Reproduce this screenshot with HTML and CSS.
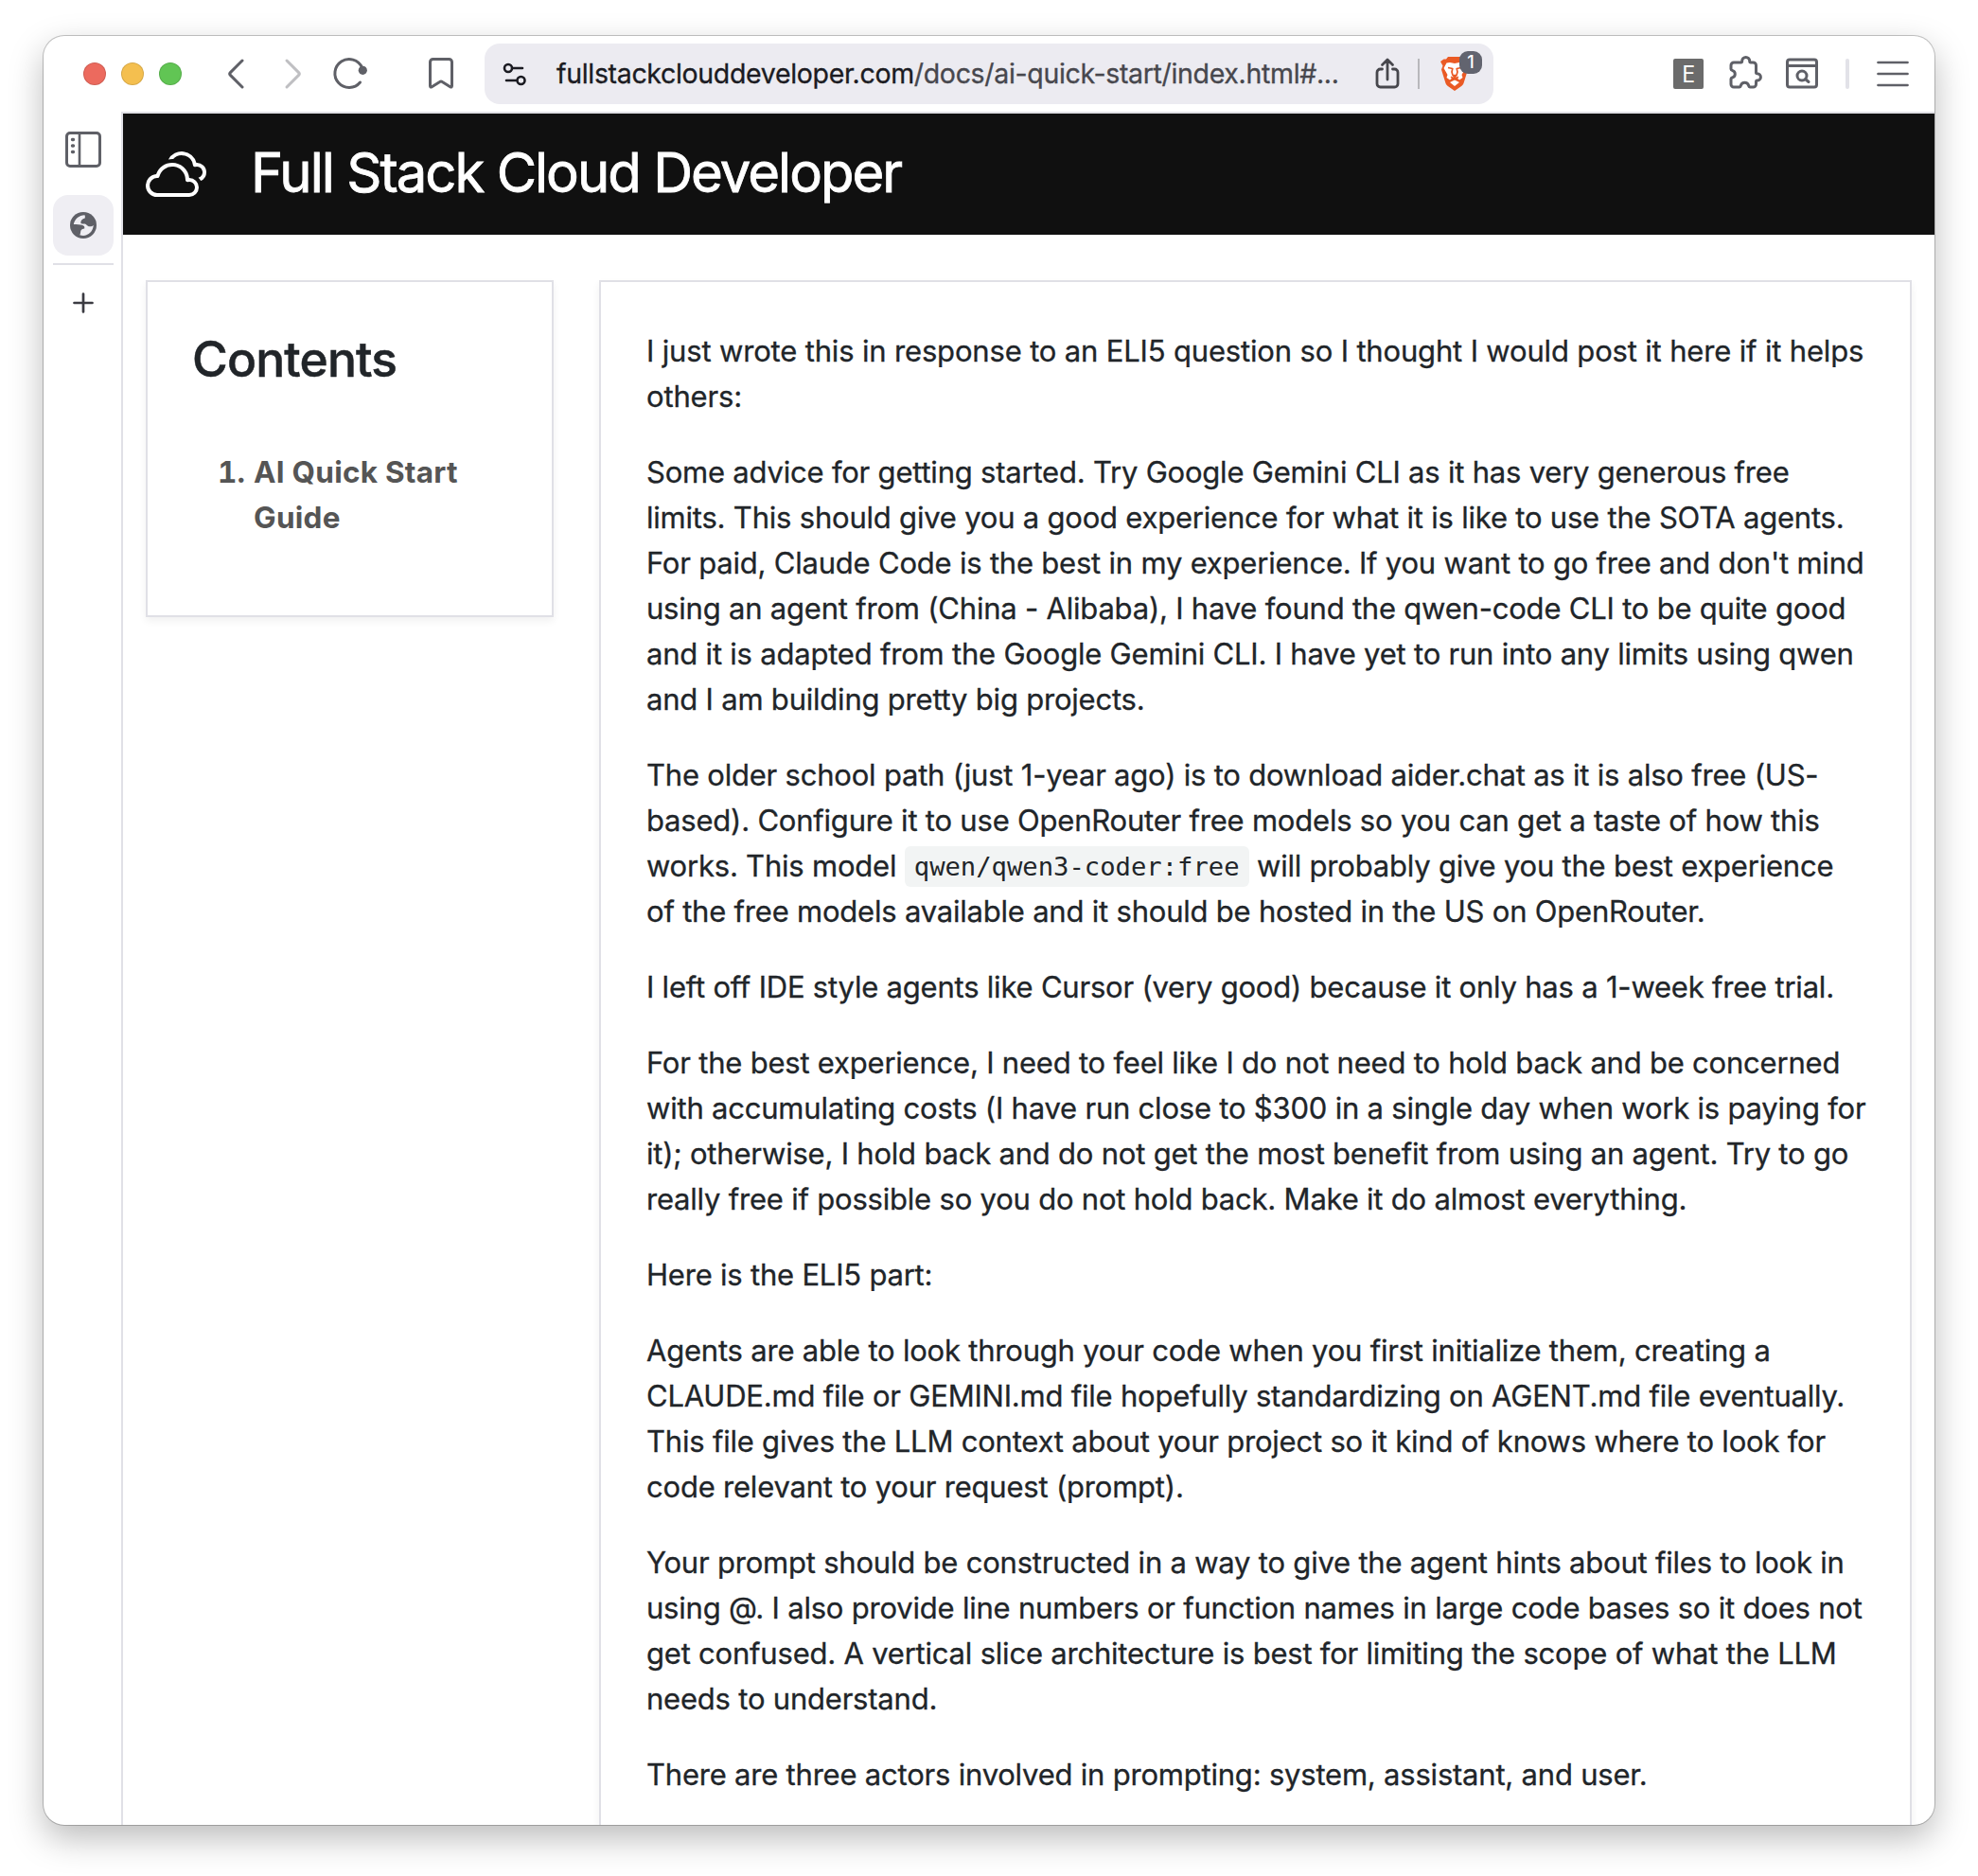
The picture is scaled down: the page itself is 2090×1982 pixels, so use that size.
FILE: index.html
```html
<!DOCTYPE html>
<html lang="en">
<head>
<meta charset="utf-8">
<title>Full Stack Cloud Developer</title>
<link rel="stylesheet" href="styles.css">
</head>
<body>
<div class="window">
  <div class="toolbar">
    <div class="lights"><i class="light red"></i><i class="light yellow"></i><i class="light green"></i></div>
    <svg class="ico back" width="36" height="40" viewBox="0 0 36 40"><path d="M25 6 12.400 18.600a2 2 0 0 0 0 2.800L25 34"/></svg>
    <svg class="ico forward" width="36" height="40" viewBox="0 0 36 40"><path d="M11 6 23.600 18.600a2 2 0 0 1 0 2.800L11 34"/></svg>
    <svg class="ico reload" width="40" height="40" viewBox="0 0 40 40"><path d="M31.500 13.200A15 15 0 1 0 29.500 29"/><circle class="solid" cx="32.300" cy="16.300" r="4.600"/></svg>
    <svg class="ico bookmark" width="40" height="40" viewBox="0 0 40 40"><path d="M11.500 4.500h17a3 3 0 0 1 3 3v25.200q0 2-1.800 1L21.300 28.500q-1.300-.9-2.600 0L10.300 33.700q-1.800 1-1.800-1V7.500a3 3 0 0 1 3-3Z"/></svg>
    <div class="address">
      <svg class="ico site" width="28" height="28" viewBox="0 0 28 28"><circle cx="7" cy="8" r="4"/><path d="M12 8h10M5 21h10"/><circle cx="20.500" cy="21" r="4"/></svg>
      <div class="url"><b>fullstackclouddeveloper.com</b>/docs/ai-quick-start/index.html#...</div>
      <svg class="ico share" width="28" height="36" viewBox="0 0 28 36"><path d="M8.500 13H6.500a3.500 3.500 0 0 0-3.500 3.500v12A3.500 3.500 0 0 0 6.500 32h15a3.500 3.500 0 0 0 3.500-3.500v-12a3.500 3.500 0 0 0-3.500-3.500H19.500M14 24V4M8.500 8.500l5.500-5.500 5.500 5.500"/></svg>
      <i class="addr-sep"></i>
      <div class="shield">
        <svg width="32" height="38" viewBox="0 0 32 38"><path fill="#ea5a25" d="M9 1h14l3.500 3.500 3.500 1-1.500 5 1.500 4-4.500 14.500a6 6 0 0 1-2 2.700L16 37l-7.500-5.300a6 6 0 0 1-2-2.700L2 14.500l1.500-4L1 6l3.500-2.500L7 3.500Z"/><path fill="#fff" d="M7.500 7.500 11 7l5 1 5-1 3.500.5 3 5.500-4 7 1 3-3.500 2.500-3-2.700-2-.8-2 .8-3 2.700L7.500 23l1-3-4-7Z"/><path fill="#fff" d="m16 25.500 5 2.500-5 4-5-4Z"/><path fill="none" stroke="#ea5a25" stroke-width="1.700" stroke-linejoin="round" d="m9 12.500 4.800 1-.8 3.500 1 3.500M23 12.500l-4.800 1 .8 3.500-1 3.500M12 22.300l4 2.200 4-2.200M14 20.500h4l-2 2Z"/></svg>
        <span class="badge">1</span>
      </div>
    </div>
    <div class="ext">E</div>
    <svg class="ico puzzle" width="40" height="40" viewBox="0 0 40 40"><path d="M8 8h7.500q1.200 0 1.200-1.500a4 4 0 0 1 8 0q0 1.500 1.200 1.500H28.500a3 3 0 0 1 3 3v7.500q0 1.200 1.200 1.200a3.600 3.600 0 0 1 0 7.400q-1.200 0-1.200 1.500V31a3 3 0 0 1-3 3h-3.200q-1.300 0-1.700-1.800a4.300 4.300 0 0 0-8.200 0Q15 34 13.700 34H8a3 3 0 0 1-3-3v-5.700q0-1 1.700-1.500a3.800 3.800 0 0 0 0-7.200Q5 16 5 15v-4a3 3 0 0 1 3-3Z"/></svg>
    <svg class="ico find" width="40" height="40" viewBox="0 0 40 40"><rect x="4.500" y="5" width="31" height="29" rx="2.500"/><path d="M5 11.500h30"/><circle cx="20" cy="22" r="5"/><path d="m23.500 25.500 3.500 3"/></svg>
    <i class="bar-sep"></i>
    <svg class="ico menu" width="40" height="40" viewBox="0 0 40 40"><path d="M4.500 8h31M4.500 20h31M4.500 32h31"/></svg>
  </div>
  <div class="body">
    <div class="rail">
      <svg class="ico panel" width="40" height="40" viewBox="0 0 40 40"><rect x="2.500" y="2.500" width="35" height="35" rx="3.500"/><path class="thin" d="M16 3v34"/><path class="dots" d="M8.500 9.500h1M8.500 16h1M8.500 22.500h1"/></svg>
      <div class="tab"><svg width="32" height="32" viewBox="0 0 32 32"><circle cx="16" cy="16" r="14" fill="#5f6067"/><path fill="#efeef3" d="M17.500 5.300c-6 .2-10.700 4.200-11.700 9.700 3.500.4 7 .2 9 .8 2.500.7 2.700 2.200 2.400 3.700-1.500.5-3.700.7-3.900 2.500-.2 1.500-.3 3-1 4.300 7 2.500 14-2.500 14.500-10.500-1 1.500-3.500 1.800-5 1.400-2-.5-2.500-2.200-4-2.600-1.500-.3-3.700.3-4.300-.8-.5-1.500 1-4.800 3.800-5 .9-.5.700-2.400.2-3.500Z"/></svg></div>
      <i class="rail-line"></i>
      <svg class="ico plus" width="32" height="32" viewBox="0 0 32 32"><path d="M16 6.500v19M6.500 16h19"/></svg>
    </div>
    <div class="page">
      <header class="site-header">
        <svg width="64" height="64" viewBox="0 0 16 16" fill="#fff"><path d="M16 7.500a2.500 2.500 0 0 1-1.456 2.272 3.500 3.500 0 0 0-.65-.824 1.500 1.500 0 0 0-.789-2.896.5.5 0 0 1-.627-.421 3 3 0 0 0-5.220-1.625 5.600 5.600 0 0 0-1.276.088 4.002 4.002 0 0 1 7.392.91A2.500 2.500 0 0 1 16 7.500"/><path d="M7 5a4.500 4.500 0 0 1 4.473 4h.027a2.500 2.500 0 0 1 0 5H3a3 3 0 0 1-.247-5.990A4.500 4.500 0 0 1 7 5m3.500 4.500a3.500 3.500 0 0 0-6.890-.873.5.5 0 0 1-.51.375A2 2 0 1 0 3 13h8.500a1.500 1.500 0 1 0-.376-2.953.5.5 0 0 1-.624-.492z"/></svg>
        <h1>Full Stack Cloud Developer</h1>
      </header>
      <div class="columns">
        <nav class="card contents">
          <h2>Contents</h2>
          <ol><li>AI Quick Start<br>Guide</li></ol>
        </nav>
        <article class="card article">
          <p class="intro">I just wrote this in response to an ELI5 question so I thought I would post it here if it helps<br>others:</p>
          <p>Some advice for getting started. Try Google Gemini CLI as it has very generous free<br>limits. This should give you a good experience for what it is like to use the SOTA agents.<br>For paid, Claude Code is the best in my experience. If you want to go free and don't mind<br>using an agent from (China - Alibaba), I have found the qwen-code CLI to be quite good<br>and it is adapted from the Google Gemini CLI. I have yet to run into any limits using qwen<br>and I am building pretty big projects.</p>
          <p>The older school path (just 1-year ago) is to download aider.chat as it is also free (US-<br>based). Configure it to use OpenRouter free models so you can get a taste of how this<br>works. This model <code>qwen/qwen3-coder:free</code> will probably give you the best experience<br>of the free models available and it should be hosted in the US on OpenRouter.</p>
          <p>I left off IDE style agents like Cursor (very good) because it only has a 1-week free trial.</p>
          <p>For the best experience, I need to feel like I do not need to hold back and be concerned<br>with accumulating costs (I have run close to $300 in a single day when work is paying for<br>it); otherwise, I hold back and do not get the most benefit from using an agent. Try to go<br>really free if possible so you do not hold back. Make it do almost everything.</p>
          <p>Here is the ELI5 part:</p>
          <p>Agents are able to look through your code when you first initialize them, creating a<br>CLAUDE.md file or GEMINI.md file hopefully standardizing on AGENT.md file eventually.<br>This file gives the LLM context about your project so it kind of knows where to look for<br>code relevant to your request (prompt).</p>
          <p>Your prompt should be constructed in a way to give the agent hints about files to look in<br>using @. I also provide line numbers or function names in large code bases so it does not<br>get confused. A vertical slice architecture is best for limiting the scope of what the LLM<br>needs to understand.</p>
          <p>There are three actors involved in prompting: system, assistant, and user.</p>
        </article>
      </div>
    </div>
  </div>
</div>
</body>
</html>
```
FILE: styles.css
```css
* { box-sizing: border-box; }
body {
  margin: 0;
  padding: 38px 46px 54px;
  height: 1982px;
  background: #fff;
  font-family: Inter, "Liberation Sans", sans-serif;
  color: #212529;
  overflow: hidden;
}
.window {
  height: 1890px;
  display: flex;
  flex-direction: column;
  background: #fff;
  border-radius: 22px;
  overflow: hidden;
  box-shadow: 0 0 0 1px rgba(0, 0, 0, .22), 0 14px 36px rgba(0, 0, 0, .27);
}
.ico { flex: none; fill: none; stroke: #5f6067; stroke-width: 3; stroke-linecap: round; stroke-linejoin: round; }
.ico .solid { fill: #5f6067; stroke: none; }

.toolbar { flex: none; height: 80px; display: flex; align-items: center; padding-left: 42px; }
.lights { display: flex; gap: 16px; }
.light { width: 24px; height: 24px; border-radius: 50%; border: 1px solid rgba(0, 0, 0, .12); }
.red { background: #ec6a5e; }
.yellow { background: #f4bf4f; }
.green { background: #61c554; }
.back { margin-left: 39px; }
.forward { margin-left: 25px; stroke: #bfbfc2; }
.reload { margin-left: 23px; }
.bookmark { margin-left: 55px; }
.address {
  flex: none; width: 1066px; height: 64px; margin-left: 26px; padding-left: 18px;
  display: flex; align-items: center; background: #ecebf1; border-radius: 16px;
}
.site { stroke: #1b1b22; stroke-width: 2.6; }
.url { width: 850px; margin-left: 30px; font-size: 28.500px; letter-spacing: -.33px; line-height: 40px; color: #47474d; white-space: nowrap; -webkit-text-stroke: .3px; }
.url b { font-weight: 400; color: #1b1b22; }
.share { margin-left: 14px; stroke: #47474d; stroke-width: 2.800; }
.addr-sep { width: 2px; height: 32px; margin-left: 18px; background: #b8b8bc; }
.shield { position: relative; width: 32px; height: 38px; margin-left: 21px; }
.shield svg { display: block; }
.badge {
  position: absolute; left: 21px; top: -5px; width: 24px; height: 24px; border-radius: 9px;
  background: #62646f; color: #fff; font-size: 18px; font-weight: 500; line-height: 24px; text-align: center;
}
.ext {
  flex: none; width: 32px; height: 32px; margin-left: 190px; border-radius: 2px;
  background: #6b6b6b; color: #fff; font: 26px/30px "Open Sans", sans-serif; text-align: center;
}
.puzzle { margin-left: 24px; }
.find { margin-left: 20px; }
.bar-sep { width: 4px; height: 32px; margin-left: 26px; border-radius: 2px; background: #e2e2e8; }
.menu { margin-left: 26px; stroke-width: 2.700; }

.body { flex: 1; min-height: 0; display: flex; }
.rail { flex: none; width: 82px; padding-top: 20px; display: flex; flex-direction: column; align-items: center; padding-left: 2px; }
.panel .thin { stroke-width: 2.600; }
.panel .dots { stroke-width: 3.400; }
.tab { width: 64px; height: 64px; margin-top: 28px; border-radius: 16px; background: #efeef3; display: flex; align-items: center; justify-content: center; }
.rail-line { width: 64px; height: 2px; margin-top: 8px; background: #e0e0e6; }
.plus { margin-top: 24px; stroke: #3b3b42; stroke-width: 2.700; }

.page { flex: 1; border-left: 2px solid #e0e0e6; border-top: 2px solid #e0e0e6; overflow: hidden; }
.site-header { height: 128px; padding: 0 24px; display: flex; align-items: center; gap: 47px; background: #101010; color: #fff; }
.site-header h1 { margin: -5px 0 0; font-size: 58px; font-weight: 400; letter-spacing: -1.970px; line-height: 72px; white-space: nowrap; -webkit-text-stroke: .8px; }
.columns { display: flex; align-items: flex-start; gap: 48px; padding: 48px 24px 0; }
.card { border: 2px solid #e0e0e6; background: #fff; box-shadow: 0 4px 8px rgba(0, 0, 0, .06); }
.contents { flex: none; width: 431px; height: 356px; padding: 48px; }
.contents h2 { margin: 1px 0 0 -1px; font-size: 51.500px; font-weight: 500; letter-spacing: -.850px; line-height: 64px; -webkit-text-stroke: .5px; }
.contents ol { margin: 64px 0 0; padding-left: 64px; font-size: 31.500px; font-weight: 700; letter-spacing: .25px; line-height: 48px; color: #555; white-space: nowrap; }
.article { flex: 1; height: 1760px; padding: 49px 0 0 48px; font-size: 31px; letter-spacing: -.210px; line-height: 48px; white-space: nowrap; -webkit-text-stroke: .3px; }
.article p { margin: 0 0 32px; }
.article .intro { letter-spacing: -.165px; }
.article code {
  padding: 6px 10px; border-radius: 6px; background: #f2f4f4; vertical-align: 1px;
  font: 27.200px/1 "DejaVu Sans Mono", monospace; letter-spacing: 0; -webkit-text-stroke: 0;
}
```
